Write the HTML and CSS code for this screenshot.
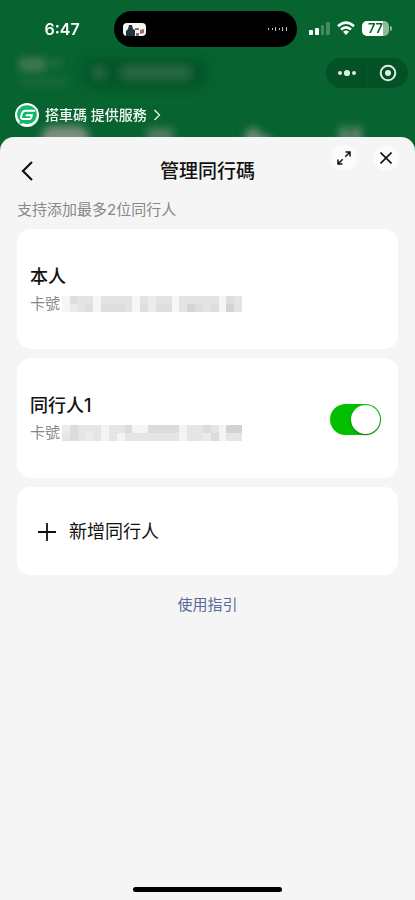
FILE: index.html
```html
<!DOCTYPE html>
<html lang="zh-Hant">
<head>
<meta charset="utf-8">
<meta name="viewport" content="width=device-width, initial-scale=1">
<title>管理同行碼</title>
<link rel="stylesheet" href="styles.css">
</head>
<body>
<div class="screen">
  <div class="backdrop" aria-hidden="true">
    <svg width="415" height="150" viewBox="0 0 415 150">
      <defs>
        <filter id="soft" x="-20%" y="-20%" width="140%" height="140%"><feGaussianBlur stdDeviation="4"/></filter>
      </defs>
      <g filter="url(#soft)">
        <rect x="82" y="58" width="126" height="31" rx="15" fill="#03502a" opacity=".6"/>
        <g fill="#8b958a">
          <g opacity=".45"><rect x="19" y="58" width="27" height="13"/><rect x="52" y="61" width="9" height="5"/></g>
          <g opacity=".15"><rect x="19" y="78" width="50" height="8"/></g>
          <g opacity=".28"><circle cx="99" cy="73" r="6"/><rect x="122" y="67" width="68" height="12"/></g>
          <g opacity=".9"><path d="M41 148q-2-22 13-22h22q15 0 13 22z"/><path d="M147 148v-20h26v20z" opacity=".6"/><path d="M245 148v-14l8-8 8 8 12 6v8z" opacity=".9"/><path d="M340 148v-21h8v21zm12 0v-21h9v21z" opacity=".9"/></g>
        </g>
      </g>
    </svg>
  </div>

  <header class="status">
    <time class="clock">6:47</time>
    <div class="island">
      <svg width="23" height="13" viewBox="0 0 23 13" aria-hidden="true">
        <rect width="23" height="13" rx="4" fill="#f4f5f6"/>
        <path d="M3 13V8l2-2 1-4h3l1 4 2 1v6z" fill="#25313b"/>
        <path d="M12 5h4v2h-4zm1 5h3v3h-3z" fill="#75797d"/>
        <path d="M17 7l4-1v4l-4 1z" fill="#9b7467"/>
      </svg>
      <svg width="20" height="6" viewBox="0 0 20 6" fill="#c4c6c4" aria-hidden="true">
        <path d="M0 2h1v2H0zM4 2h1v2H4zM7 1h1v4H7zM11 2h1v2h-1zM14 1h1v4h-1zM18 1h1v4h-1z"/>
      </svg>
    </div>
    <div class="indicators">
      <svg width="21" height="14" viewBox="0 0 21 14" fill="#fff" aria-hidden="true">
        <rect y="9" width="4" height="5" rx="1"/><rect x="6" y="7" width="4" height="7" rx="1"/>
        <g opacity=".25"><rect x="12" y="4" width="3" height="10" rx="1"/><rect x="17" y="1" width="4" height="13" rx="1"/></g>
      </svg>
      <svg width="18" height="14" viewBox="0 0 18 14" aria-hidden="true">
        <path d="M1 5.2Q9-2 17 5.2M4 8.5q5-4.4 10 0" fill="none" stroke="#fff" stroke-width="2.6"/>
        <path d="M6 10.7q3-2.4 6 0L9 14z" fill="#fff"/>
      </svg>
      <div class="battery"><span>77</span></div>
    </div>
  </header>

  <div class="toolbar">
    <div class="capsule">
      <button type="button" aria-label="更多">
        <svg width="20" height="20" viewBox="0 0 20 20" fill="#d9efdf"><circle cx="3" cy="10" r="2"/><circle cx="10" cy="10" r="3.1"/><circle cx="17" cy="10" r="2"/></svg>
      </button>
      <button type="button" aria-label="關閉小程序">
        <svg width="18" height="18" viewBox="0 0 18 18"><circle cx="9" cy="9" r="7.3" fill="none" stroke="#d9efdf" stroke-width="2"/><circle cx="9" cy="9" r="3" fill="#d9efdf"/></svg>
      </button>
    </div>
  </div>

  <a class="provider" href="#provider">
    <svg width="24" height="24" viewBox="0 0 24 24" aria-hidden="true">
      <circle cx="12" cy="12" r="12" fill="#fff"/>
      <path d="M12 2.2c6 0 9.8 4 9.8 9.4 0 5.600-4.200 9.400-9.800 9.400-1.500 0-2.900-.3-4.100-.8L4.300 21l.6-3C3.200 16.400 2.200 14.200 2.200 11.600 2.200 6.200 6.200 2.200 12 2.200z" fill="#10b969"/>
      <path d="M20 7.800H10.600Q7.900 7.800 7 10.400l-.8 2.500q-.8 3.200 2 3.200h6q1.500 0 2-1.600l.6-2.200h-6" fill="none" stroke="#fff" stroke-width="2"/>
    </svg>
    <span>搭車碼 提供服務</span>
    <svg width="8" height="12" viewBox="0 0 8 12" fill="none" stroke="#e5f2e9" stroke-width="1.4" aria-hidden="true"><path d="M1.500 1l5 5-5 5"/></svg>
  </a>

  <main class="sheet">
    <div class="sheet-head">
      <button class="back" type="button" aria-label="返回">
        <svg width="12" height="20" viewBox="0 0 12 20" fill="none" stroke="#111" stroke-width="2.2"><path d="M11 1L2 10l9 9"/></svg>
      </button>
      <h1>管理同行碼</h1>
      <div class="actions">
        <button type="button" aria-label="展開">
          <svg width="14" height="14" viewBox="0 0 14 14" fill="none" stroke="#111" stroke-width="1.5"><path d="M8.300 5.700L13 1M8.500 1H13v4.500M5.700 8.300L1 13M1 8.500V13h4.500"/></svg>
        </button>
        <button type="button" aria-label="關閉">
          <svg width="12" height="12" viewBox="0 0 12 12" fill="none" stroke="#111" stroke-width="1.6"><path d="M.5.5l11 11m0-11l-11 11"/></svg>
        </button>
      </div>
    </div>

    <p class="hint">支持添加最多2位同行人</p>

    <div class="cards">
      <section class="card">
        <div class="person">
          <h2>本人</h2>
          <p class="number">卡號
            <svg class="mask" viewBox="0 0 23 2" preserveAspectRatio="none" shape-rendering="crispEdges" role="img" aria-label="已隱藏">
              <path fill="#f6f6f6" d="M0 0h23v2H0z"/>
              <path fill="#e4e4e4" d="M1 0h3v2H1zM5 0h4v2H5zM10 0h4v2h-4zM15 0h5v2h-5zM21 0h2v2h-2z"/>
              <path fill="#dedede" d="M1 0h1v1H1zM3 1h1v1H3zM5 1h3v1H5zM10 1h1v1h-1zM12 1h2v1h-2zM16 1h2v1h-2zM19 1h1v1h-1zM21 0h1v1h-1z"/>
              <path fill="#d4d4d4" d="M21 1h1v1h-1zM16 1h1v1h-1z"/>
              <path fill="#ebebeb" d="M11 0h1v2h-1zM1 1h1v1H1z"/>
            </svg>
          </p>
        </div>
      </section>

      <section class="card">
        <div class="person">
          <h2>同行人1</h2>
          <p class="number">卡號
            <svg class="mask" viewBox="0 0 23 2" preserveAspectRatio="none" shape-rendering="crispEdges" role="img" aria-label="已隱藏">
              <path fill="#f4f4f4" d="M0 0h23v2H0z"/>
              <path fill="#e5e5e5" d="M0 0h5v2H0zM6 0h3v1H6zM6 1h1v1H6zM8 1h3v1H8zM11 0h4v2h-4zM16 0h4v2h-4zM21 0h2v2h-2z"/>
              <path fill="#dcdcdc" d="M1 0h1v2H1zM8 0h1v1H8zM11 0h4v1h-4zM18 0h1v1h-1zM19 1h1v1h-1z"/>
              <path fill="#d2d2d2" d="M21 0h2v1h-2z"/>
              <path fill="#ebebeb" d="M0 0h1v1H0zM3 1h1v1H3zM18 1h1v1h-1z"/>
            </svg>
          </p>
        </div>
        <input class="switch" type="checkbox" role="switch" aria-label="啟用同行人1" checked>
      </section>

      <button class="card add" type="button">
        <svg width="18" height="18" viewBox="0 0 18 18" stroke="#111" stroke-width="1.8" aria-hidden="true"><path d="M9 0v18M0 9h18"/></svg>
        <span>新增同行人</span>
      </button>
    </div>

    <a class="guide" href="#guide">使用指引</a>
    <div class="home" aria-hidden="true"></div>
  </main>
</div>
</body>
</html>
```
FILE: styles.css
```css
* { box-sizing: border-box; }

body {
  margin: 0;
  background: #07632f;
  color: #111;
  font-family: "Inter", "Noto Sans CJK TC", sans-serif;
}

h1, h2, p { margin: 0; }

button {
  border: 0;
  padding: 0;
  background: none;
  color: inherit;
  font: inherit;
  cursor: pointer;
}

a { text-decoration: none; }

svg { display: block; flex: none; }

.screen {
  position: relative;
  display: flex;
  flex-direction: column;
  min-height: 100vh;
}

.backdrop {
  position: absolute;
  top: 0;
  left: 0;
  right: 0;
  overflow: hidden;
}

.status,
.toolbar,
.provider,
.sheet { position: relative; }

.status {
  display: grid;
  grid-template-columns: 1fr 183px 1fr;
  align-items: center;
  padding: 11px 4px 0 0;
}

.clock {
  padding-left: 10px;
  color: #fff;
  font-size: 16px;
  font-weight: 600;
  line-height: 20px;
  text-align: center;
}

.island {
  display: flex;
  align-items: center;
  justify-content: space-between;
  height: 36px;
  padding: 0 9px;
  border-radius: 18px;
  background: #000;
}

.indicators {
  display: flex;
  align-items: center;
  gap: 7px;
  padding-left: 12px;
  margin-top: -2px;
}

.battery {
  position: relative;
  width: 27px;
  height: 15px;
  border-radius: 5px;
  background: linear-gradient(90deg, #fff 77%, #8dba9d 77%);
  color: #07632f;
  font-size: 13px;
  font-weight: 600;
  line-height: 15px;
  text-align: center;
}

.battery::after {
  content: "";
  position: absolute;
  top: 5px;
  right: -3px;
  width: 2px;
  height: 5px;
  border-radius: 0 2px 2px 0;
  background: #8dba9d;
}

.toolbar {
  display: flex;
  justify-content: flex-end;
  padding: 11px 7px 0;
}

.capsule {
  display: grid;
  grid-template-columns: 1fr 1fr;
  width: 82px;
  height: 30px;
  border-radius: 15px;
  background: #055127;
}

.capsule button {
  display: grid;
  place-items: center;
}

.capsule button + button { border-left: 1px solid #07562a; }

.provider {
  display: flex;
  align-items: center;
  align-self: flex-start;
  gap: 6px;
  margin: 15px 15px 10px;
  color: #f3f9f5;
  font-size: 14px;
  font-weight: 500;
  line-height: 24px;
}

.sheet {
  display: flex;
  flex: 1;
  flex-direction: column;
  padding: 0 17px 8px;
  border-radius: 14px 14px 0 0;
  background: #f5f5f5;
}

.sheet-head {
  display: grid;
  grid-template-columns: 70px 1fr 70px;
  align-items: center;
  padding-top: 8px;
}

.back {
  display: flex;
  align-items: center;
  width: 32px;
  height: 32px;
  margin-top: 10px;
  padding-left: 4px;
}

h1 {
  margin-top: 12px;
  font-size: 19px;
  font-weight: 500;
  line-height: 28px;
  text-align: center;
}

.actions {
  display: flex;
  align-self: start;
  justify-content: flex-end;
  gap: 16px;
  margin-right: -1px;
}

.actions button {
  display: grid;
  place-items: center;
  width: 26px;
  height: 26px;
  border-radius: 50%;
  background: #fbfbfb;
}

.hint {
  margin-top: 11px;
  color: #888;
  font-size: 15px;
  line-height: 24px;
}

.cards {
  display: grid;
  gap: 9px;
  margin-top: 7px;
}

.card {
  display: flex;
  align-items: center;
  justify-content: space-between;
  min-height: 120px;
  padding: 2px 17px 0 13px;
  border-radius: 14px;
  background: #fff;
}

h2 {
  font-size: 18px;
  font-weight: 500;
  line-height: 28px;
}

.number {
  display: flex;
  align-items: center;
  gap: 2px;
  color: #888;
  font-size: 15px;
  line-height: 26px;
}

.mask {
  width: 180px;
  height: 16px;
}

.switch {
  appearance: none;
  display: flex;
  justify-content: flex-end;
  width: 51px;
  height: 31px;
  margin: 0;
  padding: 1px;
  border-radius: 16px;
  background: #04be02;
}

.switch::before {
  content: "";
  width: 29px;
  height: 29px;
  border-radius: 50%;
  background: #fff;
  box-shadow: 0 1px 2px #0006;
}

.switch:not(:checked) {
  justify-content: flex-start;
  background: #ddd;
}

.add {
  justify-content: flex-start;
  gap: 13px;
  min-height: 88px;
  padding-left: 21px;
  font-size: 18px;
  line-height: 28px;
}

.guide {
  align-self: center;
  margin-top: 18px;
  color: #576b95;
  font-size: 15px;
  line-height: 24px;
}

.home {
  align-self: center;
  width: 149px;
  height: 5px;
  margin-top: auto;
  border-radius: 3px;
  background: #000;
}
```
